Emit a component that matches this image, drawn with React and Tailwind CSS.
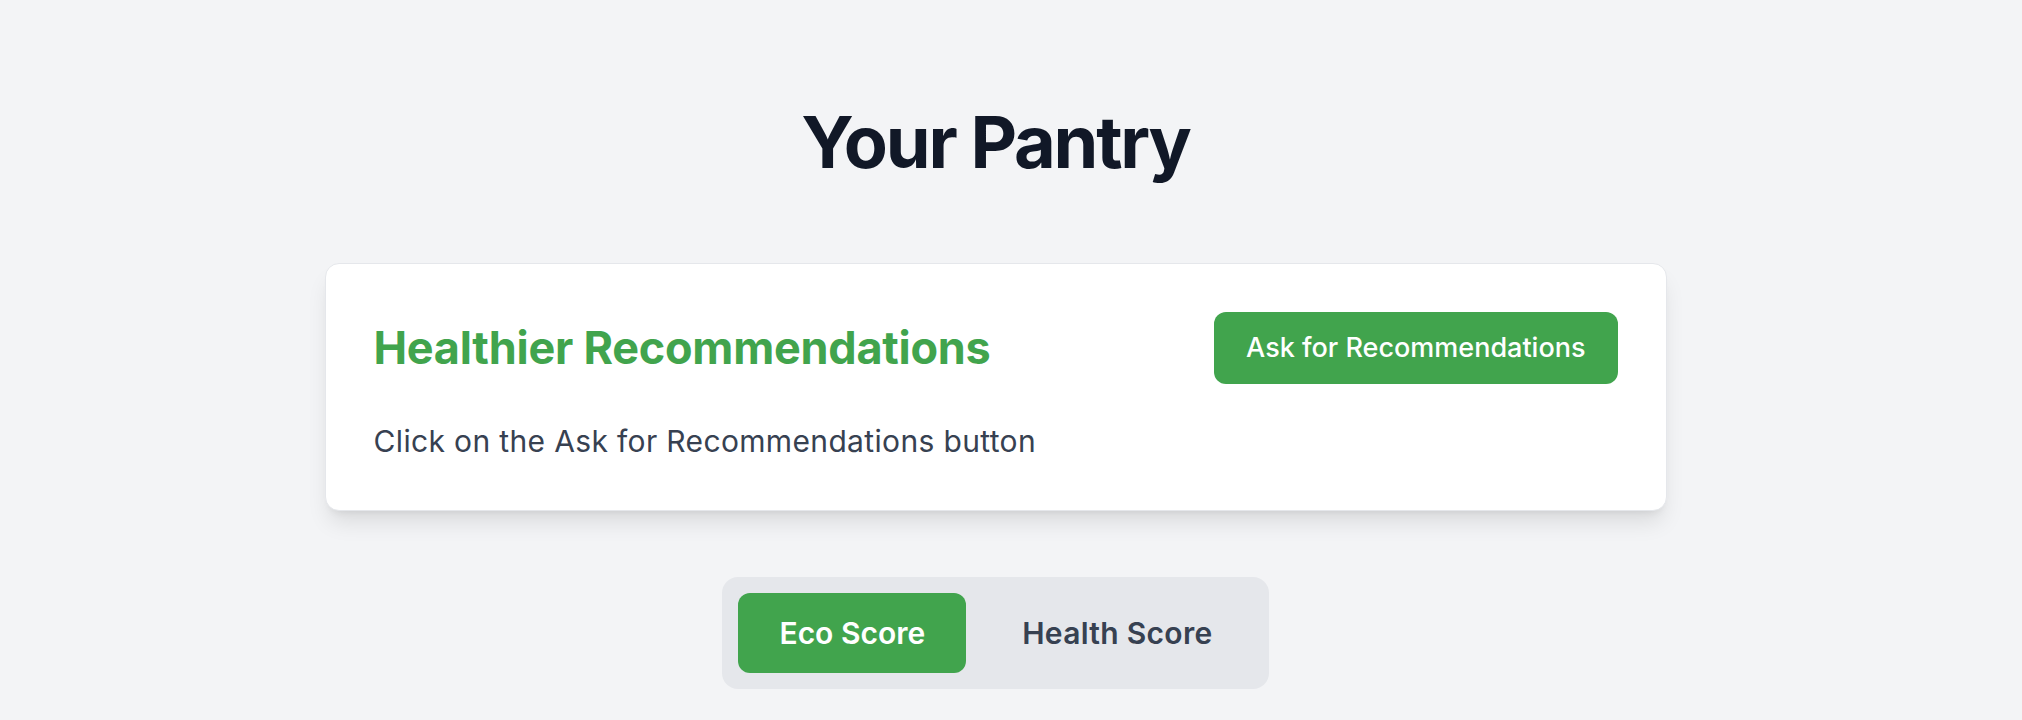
export default function App() {
  return (
    <div className="min-h-screen bg-[#f3f4f6] pr-[31px] font-['Inter',sans-serif]">
      <div className="flex flex-col items-center pt-[106px]">
        <h1 className="text-[72px] font-bold leading-[72px] tracking-[-2.2px] text-[#111827]">
          Your Pantry
        </h1>

        <section className="mt-[85px] w-[1342px] rounded-[14px] border-[1.5px] border-[#e5e7eb] bg-white p-[48px] shadow-[0_15px_22px_-4px_rgba(0,0,0,0.1),0_6px_9px_-6px_rgba(0,0,0,0.1)]">
          <div className="flex items-center justify-between">
            <h2 className="text-[45px] font-bold leading-[54px] tracking-[-0.25px] text-[#41a44d]">
              Healthier Recommendations
            </h2>
            <button
              type="button"
              className="h-[72px] rounded-[12px] bg-[#41a44d] px-[32px] text-[27px] font-medium leading-[42px] text-white"
            >
              Ask for Recommendations
            </button>
          </div>
          <p className="mt-[36px] text-[30px] leading-[42px] tracking-[0.35px] text-[#374151]">
            Click on the Ask for Recommendations button
          </p>
        </section>

        <div className="mt-[66px] flex gap-[16px] rounded-[16px] bg-[#e5e7eb] p-[16px]">
          <button
            type="button"
            className="h-[80px] rounded-[12px] bg-[#41a44d] px-[41px] text-[30px] font-semibold leading-[42px] text-white"
          >
            Eco Score
          </button>
          <button
            type="button"
            className="h-[80px] rounded-[12px] px-[40px] text-[30px] font-semibold leading-[42px] tracking-[0.3px] text-[#374151]"
          >
            Health Score
          </button>
        </div>
      </div>
    </div>
  )
}
